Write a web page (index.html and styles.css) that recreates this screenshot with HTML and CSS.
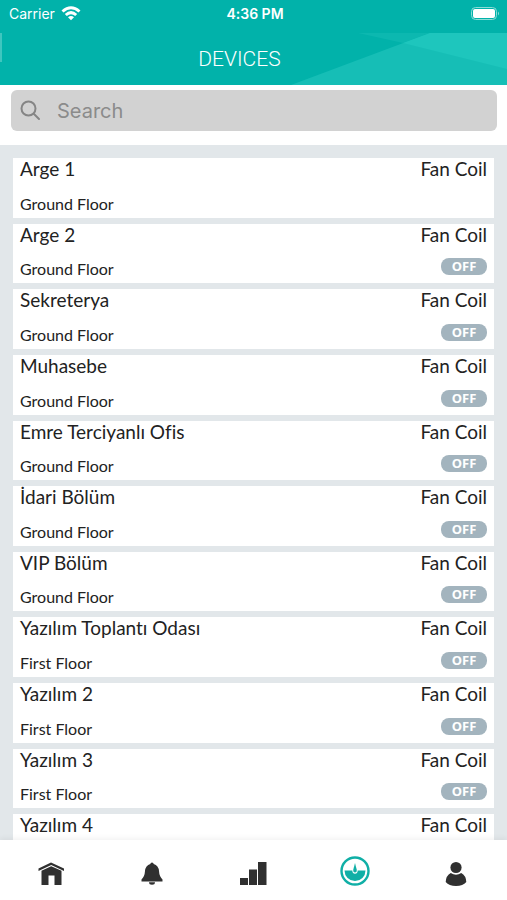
FILE: index.html
```html
<!DOCTYPE html>
<html lang="en">
<head>
<meta charset="utf-8">
<meta name="viewport" content="width=device-width, initial-scale=1">
<title>Devices</title>
<link rel="stylesheet" href="styles.css">
</head>
<body>
<div class="app">
  <div class="status">
    <div class="carrier">
      <span>Carrier</span>
      <svg width="20" height="15" viewBox="0 0 20 15" fill="none" stroke="#fff" stroke-width="3"><path d="M1.500 5.500Q10-2 18.500 5.500M4.800 9Q10 4.300 15.200 9"/><path d="M10 14.200 7 11.200Q10 8.700 13 11.200Z" fill="#fff" stroke="none"/></svg>
    </div>
    <span class="time">4:36 PM</span>
    <svg class="battery" width="30" height="14" viewBox="0 0 30 14"><rect x="0.500" y="0.500" width="25" height="12" rx="4" fill="none" stroke="#8cdcd6"/><rect x="2" y="2" width="22" height="9" rx="2" fill="#fff"/><path d="M27 4.500v4q2-2 0-4z" fill="#8cdcd6"/></svg>
  </div>
  <header class="header">
    <svg class="facets" viewBox="0 0 507 52" preserveAspectRatio="none" aria-hidden="true"><path d="M291 52 430 0H507V52Z" fill="#16beb6"/><path d="M358 0H430L403 10Z" fill="#0cb8b0"/><path d="M403 10 430 0H507V36Z" fill="#1ec6bd"/><path d="M0 0H2V29H0Z" fill="#3fc6bf"/></svg>
    <h1 class="title">DEVICES</h1>
  </header>
  <div class="search">
    <label class="field">
      <svg width="22" height="22" viewBox="0 0 22 22" fill="none" stroke="#858585" stroke-width="2" stroke-linecap="round"><circle cx="8.500" cy="8.500" r="7"/><path d="m14 14 5 5"/></svg>
      <input type="search" placeholder="Search" aria-label="Search">
    </label>
  </div>
  <main class="content">
    <ul class="list">
      <li class="card"><span class="name">Arge 1</span><span class="name">Fan Coil</span><span class="floor">Ground Floor</span></li>
      <li class="card"><span class="name">Arge 2</span><span class="name">Fan Coil</span><span class="floor">Ground Floor</span><span class="badge">OFF</span></li>
      <li class="card"><span class="name">Sekreterya</span><span class="name">Fan Coil</span><span class="floor">Ground Floor</span><span class="badge">OFF</span></li>
      <li class="card"><span class="name">Muhasebe</span><span class="name">Fan Coil</span><span class="floor">Ground Floor</span><span class="badge">OFF</span></li>
      <li class="card"><span class="name">Emre Terciyanlı Ofis</span><span class="name">Fan Coil</span><span class="floor">Ground Floor</span><span class="badge">OFF</span></li>
      <li class="card"><span class="name">İdari Bölüm</span><span class="name">Fan Coil</span><span class="floor">Ground Floor</span><span class="badge">OFF</span></li>
      <li class="card"><span class="name">VIP Bölüm</span><span class="name">Fan Coil</span><span class="floor">Ground Floor</span><span class="badge">OFF</span></li>
      <li class="card"><span class="name">Yazılım Toplantı Odası</span><span class="name">Fan Coil</span><span class="floor">First Floor</span><span class="badge">OFF</span></li>
      <li class="card"><span class="name">Yazılım 2</span><span class="name">Fan Coil</span><span class="floor">First Floor</span><span class="badge">OFF</span></li>
      <li class="card"><span class="name">Yazılım 3</span><span class="name">Fan Coil</span><span class="floor">First Floor</span><span class="badge">OFF</span></li>
      <li class="card"><span class="name">Yazılım 4</span><span class="name">Fan Coil</span></li>
    </ul>
  </main>
  <nav class="tabs">
    <a href="#home" aria-label="Home"><svg width="30" height="30" viewBox="0 0 30 30" fill="#303030"><path d="M2.500 10.500 15 4.500 28 10.500V13L15.200 7 2.500 13Z"/><path d="M5.500 12.800 15.200 8.200 25.500 12.800V27H18.500V17.500H12.500V27H5.500Z"/></svg></a>
    <a href="#alerts" aria-label="Alerts"><svg width="30" height="30" viewBox="0 0 30 30" fill="#303030"><path d="M13.300 6Q13.500 4.500 15 4.500T16.700 6Q21.500 7.500 22 13 22.300 18.500 25.500 21.500V23.500H4.500V21.500Q7.700 18.500 8 13 8.500 7.500 13.300 6ZM12 24.300H18Q18 26.800 15 26.800T12 24.300Z"/></svg></a>
    <a href="#usage" aria-label="Usage"><svg width="30" height="30" viewBox="0 0 30 30" fill="#303030"><path d="M2 20H10V27H2ZM11 11.500H19V27H11ZM20 4H28.500V27H20Z"/></svg></a>
    <a href="#devices" aria-label="Devices" aria-current="page"><svg class="dial" width="30" height="30" viewBox="0 0 30 30"><circle cx="15" cy="15" r="13.500" fill="#fff" stroke="#10afa6" stroke-width="2.400"/><path d="M4.500 14.500H12.300Q12.500 17.800 15 17.800T17.700 14.500H25.500A10.500 10.500 0 0 1 4.500 14.500Z" fill="#10afa6"/><path d="M15 7 16.800 14Q17 16.500 15 16.500T13.200 14Z" fill="#10afa6"/></svg></a>
    <a href="#profile" aria-label="Profile"><svg width="30" height="30" viewBox="0 0 30 30" fill="#303030"><circle cx="15" cy="9.500" r="5.600"/><path d="M9.800 15Q15 18.500 20.200 15 25 17.500 25.300 24 22 28 15 28T4.700 24Q5 17.500 9.800 15Z"/></svg></a>
  </nav>
</div>
</body>
</html>
```
FILE: styles.css
```css
* { box-sizing: border-box; }

body {
  margin: 0;
  font-family: Lato, sans-serif;
  font-variant-ligatures: none;
  color: #222;
  background: #fff;
}

.app {
  display: flex;
  flex-direction: column;
  height: 100vh;
}

.status {
  display: grid;
  grid-template-columns: 1fr auto 1fr;
  align-items: center;
  height: 33px;
  padding: 0 6px 6px 9px;
  background: #01b2aa;
  color: #fff;
  font-family: Inter, sans-serif;
  font-size: 14px;
}

.carrier {
  display: flex;
  align-items: center;
  gap: 6px;
}

.time { font-weight: 600; }

.battery { justify-self: end; }

.header {
  display: grid;
  height: 52px;
  background: #01b2aa;
}

.facets, .title { grid-area: 1 / 1; }

.facets {
  width: 100%;
  height: 52px;
}

.title {
  align-self: center;
  margin: 0 28px 0 0;
  color: #fff;
  font-family: Roboto, sans-serif;
  font-size: 21px;
  font-weight: 300;
  text-align: center;
}

.search { padding: 5px 10px 14px 11px; }

.field {
  display: flex;
  align-items: center;
  gap: 15px;
  height: 41px;
  padding: 0 9px;
  border-radius: 6px;
  background: #d2d2d2;
}

.field input {
  flex: 1;
  min-width: 0;
  padding: 0;
  border: 0;
  outline: 0;
  background: none;
  color: #333;
  font-family: Inter, sans-serif;
  font-size: 20px;
}

.field input::placeholder { color: #8b8b8b; }

.content {
  flex: 1;
  min-height: 0;
  overflow: hidden;
  padding: 13px 13px 0;
  background: #e2e7ea;
}

.list {
  display: grid;
  grid-auto-rows: 1fr;
  gap: 6px;
  min-height: 716px;
  margin: 0;
  padding: 0;
  list-style: none;
}

.card {
  display: grid;
  grid-template-columns: 1fr auto;
  grid-template-rows: 22px 1fr;
  justify-items: start;
  padding: 0 7px;
  background: #fff;
}

.name {
  font-size: 19px;
  line-height: 22px;
}

.floor {
  align-self: end;
  margin-bottom: 4px;
  font-size: 16px;
  line-height: 20px;
}

.badge {
  align-self: end;
  justify-self: end;
  width: 46px;
  margin-bottom: 8px;
  border-radius: 8px;
  background: #a3b4be;
  color: #fff;
  font-family: "Noto Sans", sans-serif;
  font-size: 13px;
  font-weight: 700;
  line-height: 17px;
  text-align: center;
}

.tabs {
  display: flex;
  justify-content: space-around;
  height: 60px;
  padding-top: 18px;
  background: #fff;
  box-shadow: 0 -2px 5px #0000000d;
}

.tabs a { height: 30px; }

.dial { margin-top: -2px; }
```
